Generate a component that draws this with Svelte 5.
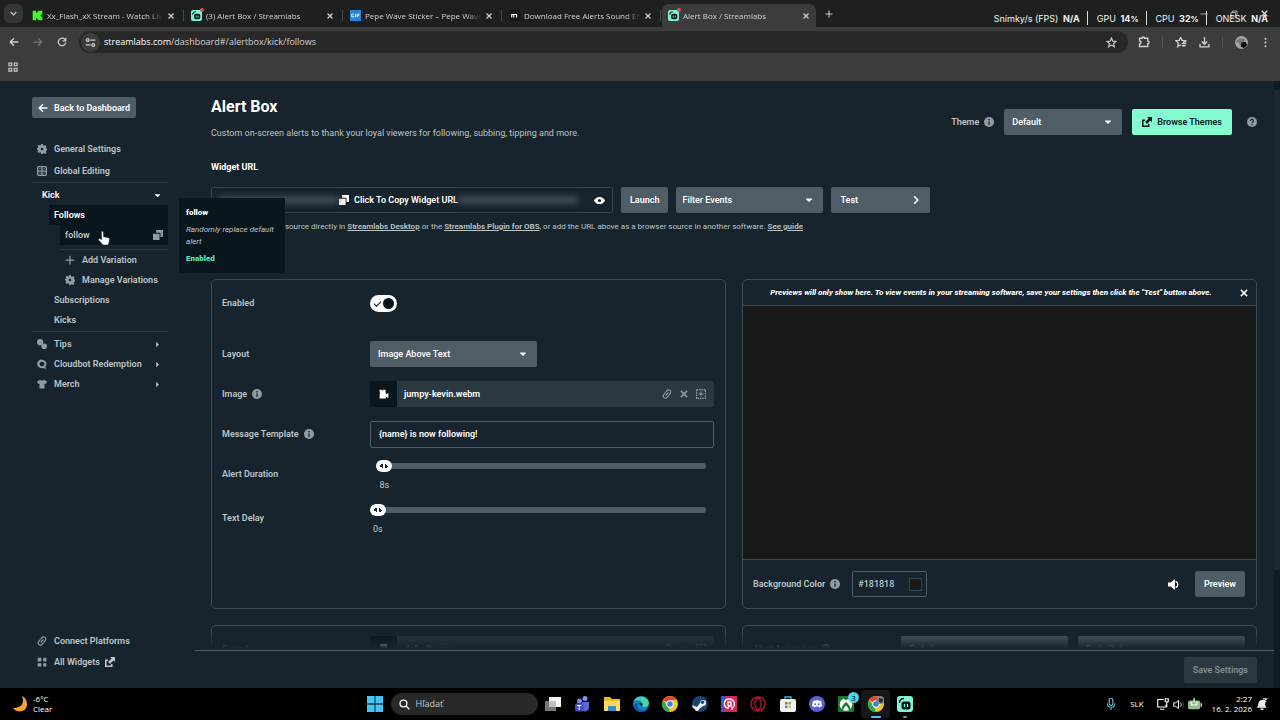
<script>
  let enabled = $state(true);
  let layout = $state('Image Above Text');
  let theme = $state('Default');
  let filter = $state('Filter Events');
  let message = $state('{name} is now following!');
  let background = $state('#181818');
  let duration = $state(8);
  let delay = $state(0);

  // Share of the track that lies left of the thumb
  let durationPos = $derived(((duration - 2) / 298) * 95);
  let delayPos = $derived((delay / 60) * 95);

  const tabs = [
    { icon: 'kick', title: 'Xx_Flash_xX Stream - Watch Liv' },
    { icon: 'streamlabs', title: '(3) Alert Box / Streamlabs' },
    { icon: 'gif', title: 'Pepe Wave Sticker – Pepe Wave' },
    { icon: 'sound', title: 'Download Free Alerts Sound Eff' },
    { icon: 'streamlabs', title: 'Alert Box / Streamlabs', active: true }
  ];

  const stats = [
    { label: 'Snímky/s (FPS)', value: 'N/A' },
    { label: 'GPU', value: '14', unit: '%' },
    { label: 'CPU', value: '32', unit: '%' },
    { label: 'ONESK', value: 'N/A' }
  ];

  const taskApps = [
    { icon: 'taskview', name: 'Task view' },
    { icon: 'teams', name: 'Teams' },
    { icon: 'folder', name: 'Explorer' },
    { icon: 'edge', name: 'Edge' },
    { icon: 'chrome', name: 'Chrome' },
    { icon: 'steam', name: 'Steam' },
    { icon: 'operagx', name: 'Game launcher' },
    { icon: 'opera', name: 'Opera GX' },
    { icon: 'store', name: 'Store' },
    { icon: 'discord', name: 'Discord' },
    { icon: 'xbox', name: 'Xbox', badge: '3' },
    { icon: 'chromeUser', name: 'Chrome', state: 'focused' },
    { icon: 'streamlabs', name: 'Streamlabs Desktop', state: 'open' }
  ];

  // All icons are drawn on a 16x16 grid
  const icons = {
    down: '<path d="M4 6l4 4 4-4" fill="none" stroke="currentColor" stroke-width="2"/>',
    caret: '<path d="M2 5h12v1.500L8 12 2 6.500z" fill="currentColor"/>',
    caretRight: '<path d="M5 3h1.500L11 8l-4.500 5H5z" fill="currentColor"/>',
    chevron: '<path d="M5 2l6 6-6 6" fill="none" stroke="currentColor" stroke-width="2.500"/>',
    close: '<path d="M3 3l10 10M13 3L3 13" fill="none" stroke="currentColor" stroke-width="2.400"/>',
    plus: '<path d="M8 1v14M1 8h14" fill="none" stroke="currentColor" stroke-width="2"/>',
    back: '<path d="M15 8H2M8 2L2 8l6 6" fill="none" stroke="currentColor" stroke-width="2.200"/>',
    forward: '<path d="M1 8h13M8 2l6 6-6 6" fill="none" stroke="currentColor" stroke-width="2"/>',
    reload: '<path d="M13 4.500A6 6 0 1 0 14 9M14 1v5H9" fill="none" stroke="currentColor" stroke-width="2"/>',
    tune: '<g fill="none" stroke="currentColor" stroke-width="1.800"><circle cx="4" cy="4.500" r="2"/><path d="M8 4.500h7M1 11.500h7"/><circle cx="12" cy="11.500" r="2"/></g>',
    apps: '<g fill="none" stroke="currentColor" stroke-width="1.800"><path d="M1.500 1.500h4.500v4.500H1.500zM10 1.500h4.500v4.500H10zM1.500 10h4.500v4.500H1.500zM10 10h4.500v4.500H10z"/></g>',
    star: '<path d="M8 1.500l1.900 4.500 4.800.4-3.700 3.100 1.200 4.800L8 11.700l-4.200 2.600L5 9.500 1.300 6.400l4.800-.4z" fill="none" stroke="currentColor" stroke-width="1.600"/>',
    starPlus: '<path d="M7.500 1.500l1.700 4.200 4.700.4-3 2.500M5.500 13l-2 1.200 1-4.700L1 6.200l4.700-.4 1.800-4.300M5.500 13l2-1.500M9 10h6M9 13h5M11 7.500h4" fill="none" stroke="currentColor" stroke-width="1.700"/>',
    puzzle: '<path d="M2 3h3.500a1.700 1.700 0 0 1 3.400 0H13v3.800a1.700 1.700 0 0 1 0 3.400V14H2v-3.500a2 2 0 0 0 0-4z" fill="none" stroke="currentColor" stroke-width="1.800"/>',
    download: '<path d="M8 0v10M4 6.500L8 10.500l4-4M1.500 10v4.500h13V10" fill="none" stroke="currentColor" stroke-width="1.900"/>',
    dots: '<g fill="currentColor"><circle cx="8" cy="2.500" r="1.500"/><circle cx="8" cy="8" r="1.500"/><circle cx="8" cy="13.500" r="1.500"/></g>',
    avatar: '<circle cx="8" cy="8" r="8" fill="#a6a6a6"/><path d="M2 5c2 0 3-3 5-2s4-1 5 1-2 3 1 4-1 5-5 4-2-4-4-4-3 1-2-3z" fill="#777"/><path d="M8 8l5-1 2 4-4 4-4-2z" fill="#111"/>',
    minimise: '<path d="M1 8h14" stroke="currentColor" stroke-width="1.500"/>',
    restore: '<path d="M2 5h9v9H2zM5 5V2h9v9h-3" fill="none" stroke="currentColor" stroke-width="1.500"/>',
    gear: '<path d="M6.600 0h2.800l.5 2.200 1.400.6 1.900-1.200 2 2-1.200 1.900.6 1.400 2.200.5v2.700l-2.200.5-.6 1.500 1.200 1.800-2 2-1.900-1.200-1.400.6L9.400 16H6.600l-.5-2.300-1.400-.6-1.900 1.200-2-2L2 10.500l-.6-1.400L0 8.600V6.400l1.700-.5L2 4.500.8 2.900l2-1.700 1.900 1.200 1.400-.4z" fill="currentColor"/><circle cx="8" cy="8" r="2" fill="#17242d"/>',
    global: '<rect x="1" y="1" width="14" height="14" rx="2" fill="none" stroke="currentColor" stroke-width="2.200"/><path d="M8 1v14M1 8h14" stroke="currentColor" stroke-width="2"/><path d="M3 4.500h4M9 4.500h4M3 11.500h4M9 11.500h4" stroke="currentColor"/>',
    copy: '<path d="M5 0h11v11h-4V4.500H5z" fill="currentColor"/><path d="M0 6h10.500v10H0z" fill="currentColor"/>',
    tips: '<circle cx="5" cy="5" r="5" fill="currentColor"/><circle cx="11.500" cy="11.500" r="4.500" fill="currentColor"/>',
    cloudbot: '<path d="M8 1a7.500 6.800 0 1 0 2 13.300L14.500 16l-1-4A7.500 6.800 0 0 0 8 1zm0 3.300a4 3.600 0 1 1 0 7.200 4 3.600 0 0 1 0-7.200z" fill="currentColor" fill-rule="evenodd"/>',
    shirt: '<path d="M5 1c1 2 5 2 6 0l5 3-2 4-2-1v8H4V7L2 8 0 4z" fill="currentColor"/>',
    link: '<g transform="rotate(-50 8 8)" fill="none" stroke="currentColor" stroke-width="1.900" stroke-linecap="round"><path d="M6.500 11.500H4a3.500 3.500 0 0 1 0-7h3.500M9.500 4.500H12a3.500 3.500 0 0 1 0 7H8.500M5.500 8h5"/></g>',
    widgets: '<path d="M1 1h6v6H1zM10 1h5v6h-5zM1 10h6v5H1zM10 10h5v5h-5z" fill="currentColor"/>',
    external: '<path d="M8 0h8v8l-2.500-2.500L8 11 5 8l5.500-5.500zM0 4h5v2.500H2.500v7h7V11H12v5H0z" fill="currentColor"/>',
    info: '<circle cx="8" cy="8" r="8" fill="currentColor"/><path d="M8 3v2.500M8 7v5.500" stroke="#17242d" stroke-width="2.200"/>',
    question: '<circle cx="8" cy="8" r="8" fill="currentColor"/><path d="M5.500 6.500C5.500 2.500 11 3.500 10.300 6.500 10 8 8 8 8 10M8 11.300v2" fill="none" stroke="#17242d" stroke-width="1.800"/>',
    eye: '<path d="M0 8c3-7 13-7 16 0-3 7-13 7-16 0z" fill="currentColor"/><circle cx="8" cy="8" r="2.300" fill="#17242d"/>',
    video: '<path d="M1 1h9.500v5H11v2.500L15 6.500v8L11 12.500V15H1V8l1-1-1-2z" fill="currentColor"/><path d="M5.700 0v3" stroke="#09161d"/>',
    library: '<path d="M1 1h14v14H1z" fill="none" stroke="currentColor" stroke-width="2" stroke-dasharray="2.500 1.300"/><path d="M8 4v8M4 8h8" stroke="currentColor" stroke-width="1.700"/>',
    audio: '<path d="M2 0h11v16H2z" fill="currentColor"/><circle cx="7.500" cy="9" r="3" fill="#17242d"/>',
    volume: '<path d="M0 5h4l6-5v16l-6-5H0z" fill="currentColor"/><path d="M11 3.500c4.500 2 4.500 7 0 9" fill="none" stroke="currentColor" stroke-width="2"/>',
    hand: '<path d="M5 1.500C5 0 7.200 0 7.300 1.500l.3 5 5.400 1.200c1 .3 1.300 1 1.200 2L13.500 14l-1 2H7L2 10.500c-1-1.500.5-2.500 2-1.500l1.300 1z" fill="#fff" stroke="#17242d" stroke-width=".6"/>',
    kick: '<path d="M1 1h5v3h1.500V2.500H9V1h6v5h-1.500v1.500H12v1h1.500V10H15v5H9v-1.500H7.500V12H6v3H1z" fill="#3bfb2a"/>',
    streamlabs: '<rect width="16" height="16" rx="3" fill="#80f5d2"/><path d="M2.500 7C2.500 4 4 2.500 7 2.500" fill="none" stroke="#09161d" stroke-width="1.500"/><rect x="4.500" y="5.500" width="9" height="8" rx="2.500" fill="#09161d"/><path d="M7.500 8v3M10.500 8v3" stroke="#80f5d2" stroke-width="1.300"/>',
    gif: '<rect width="16" height="16" fill="#2d83d3"/><path d="M5.500 6H2.500v4h3V8.300M8 5.500v5M10.500 10.500V6h3.500M10.500 8.300h3" fill="none" stroke="#dceeff" stroke-width="1.400"/>',
    sound: '<rect width="16" height="16" rx="2" fill="#161616"/><path d="M4 11V6.500h3V11M7 6.500h4V11" fill="none" stroke="#fff" stroke-width="1.600"/>',
    moon: '<path d="M10 0c3 7-1 12-9 12 3 5 13 5 14-3 .4-4-2-8-5-9z" fill="#f6a431"/>',
    windows: '<path d="M0 0h7.600v7.600H0zM8.400 0H16v7.600H8.400zM0 8.400h7.600V16H0zM8.400 8.400H16V16H8.400z" fill="#45c5f5"/>',
    search: '<circle cx="6.500" cy="6.500" r="5" fill="none" stroke="currentColor" stroke-width="1.900"/><path d="M10 10l5 5" stroke="currentColor" stroke-width="2"/>',
    taskview: '<path d="M4 1h12v10H4z" fill="#f4f4f4"/><path d="M0 5h11v10H0z" fill="#777"/><path d="M4 5h7v6H4z" fill="#bdbdbd"/>',
    teams: '<circle cx="5.500" cy="5" r="2.500" fill="#7b83eb"/><circle cx="11" cy="2.500" r="2.500" fill="#868df4"/><path d="M8 6h7v6a4 4 0 0 1-7 2z" fill="#6069d6"/><rect x="1" y="7.500" width="8.500" height="8" rx="2" fill="#474fbd"/><path d="M3 9.500h4.500M5.200 9.500v4.500" stroke="#fff"/>',
    folder: '<path d="M0 1h6l2 2h8v12H0z" fill="#f2b723"/><path d="M0 5h16v10H0z" fill="#ffdc60"/><path d="M4 10h8v5H4z" fill="#3e89c9"/>',
    edge: '<circle cx="8" cy="8" r="8" fill="#1681ca"/><path d="M1 5C4-1 15-1 16 7c0 4-5 5-7 3 2-4-3-7-8-5z" fill="#48d6a3"/><path d="M5 8c-2 4 2 8 8 6-4 4-12 1-12-4 0-2 2-3 4-2z" fill="#0b56a8"/><path d="M9 10c-2-1-2-3-4-2 1-2 6-1 4 2z" fill="#07111c"/>',
    chrome: '<circle cx="8" cy="8" r="8" fill="#f2c62e"/><path d="M8 8L1 4C4-1 12-1 15 4H8z" fill="#e44435"/><path d="M1 4l5 7 2 5C1 16-2 9 1 4z" fill="#30a851"/><circle cx="8" cy="8" r="3.700" fill="#fff"/><circle cx="8" cy="8" r="2.800" fill="#3d7de9"/>',
    steam: '<circle cx="8" cy="8" r="8" fill="#164574"/><path d="M0 9l5 2 3-4a3 3 0 1 1 3 3l-4 3a2 2 0 0 1-4 0l-2-1z" fill="#f3f5f7"/><circle cx="10.500" cy="6.300" r="1.700" fill="#164574"/>',
    operagx: '<path d="M0 0h16v16H0z" fill="#d92557"/><path d="M0 0h5l-2 16H0z" fill="#4152cc"/><path d="M11 14v-2c4-2 3-9-3-9s-6 9-1 9l1-2h2V6H7v4" fill="none" stroke="#fff" stroke-width="1.400"/>',
    opera: '<circle cx="8" cy="8" r="7" fill="none" stroke="#bd1739" stroke-width="1.400"/><ellipse cx="8" cy="8" rx="3.200" ry="5.500" fill="none" stroke="#bd1739" stroke-width="1.300"/>',
    store: '<path d="M5 4V1h6v3" fill="none" stroke="#3cb4eb" stroke-width="1.300"/><rect x="0" y="3" width="16" height="13" rx="2" fill="#edf1f4"/><path d="M5 6h2.500v2.500H5z" fill="#e95131"/><path d="M8.500 6H11v2.500H8.500z" fill="#75b840"/><path d="M5 9.500h2.500V12H5z" fill="#259edc"/><path d="M8.500 9.500H11V12H8.500z" fill="#f5b522"/>',
    discord: '<circle cx="8" cy="8" r="8" fill="#5564d9"/><path d="M4 5c3-1 5-1 8 0l1 5-3 1.500-.6-1H6.600l-.6 1L3 10z" fill="#fff"/><circle cx="6.300" cy="8.300" r="1" fill="#5564d9"/><circle cx="9.700" cy="8.300" r="1" fill="#5564d9"/>',
    xbox: '<rect width="16" height="16" rx="1" fill="#187a2a"/><circle cx="8" cy="8.500" r="6.300" fill="#fff"/><path d="M8 4.500C6.500 3 5 2.300 4 3c2-1.500 6-1.500 8 0-1-.7-2.500 0-4 1.500zM3.500 13c.5-3 2.500-5.500 4.500-7 2 1.500 4 4 4.500 7l-1.500 1.200C10.300 12 9 10.300 8 9.500c-1 .8-2.300 2.500-3 4.700z" fill="#187a2a"/>',
    chromeUser: '<circle cx="8" cy="8" r="8" fill="#f2c62e"/><path d="M8 8L1 4C4-1 12-1 15 4H8z" fill="#e44435"/><path d="M1 4l5 7 2 5C1 16-2 9 1 4z" fill="#30a851"/><circle cx="8" cy="8" r="3.700" fill="#fff"/><circle cx="8" cy="8" r="2.800" fill="#3d7de9"/><circle cx="12" cy="4" r="4" fill="#858585"/><path d="M11 2l4 1-1 4-3-1z" fill="#282828"/>',
    mic: '<rect x="5.500" y="0" width="5" height="10" rx="2.500" fill="none" stroke="#a9dff2" stroke-width="1.300"/><path d="M3 7c0 7 10 7 10 0M8 12v4" fill="none" stroke="#45b9d8" stroke-width="1.500"/>',
    network: '<path d="M9 2H1v10h11V9M4 15h6M11 1h4v4h-4zM13 5v7" fill="none" stroke="currentColor" stroke-width="1.500"/>',
    speaker: '<path d="M1 5.500h3L8 2v12l-4-3.500H1zM10.500 5c2 2 2 4 0 6" fill="none" stroke="currentColor" stroke-width="1.400"/><path d="M13 3c3 3 3 7 0 10" fill="none" stroke="#555" stroke-width="1.400"/>',
    battery: '<rect x="0" y="4" width="14" height="10" rx="2" fill="#94bf8d"/><path d="M14.500 7h1.500v4h-1.500z" fill="#ddd"/><path d="M7 1v5M4 5v4h6V5" fill="none" stroke="#e9f5e7" stroke-width="1.500"/>',
    bell: '<path d="M1 13c3-3 1-8 5-10s8 0 6 6l2 4z" fill="#eee"/><path d="M6 14h4v2H6z" fill="#eee"/><path d="M9 1h5l-4 4h4" fill="none" stroke="#eee" stroke-width="1.500"/>'
  };
</script>

{#snippet icon(name, size = 10)}
  <svg class="icon" width={size} height={size} viewBox="0 0 16 16" aria-hidden="true">{@html icons[name]}</svg>
{/snippet}

<div class="screen">
  <div class="stats">
    {#each stats as stat}
      <span>{stat.label} <b>{stat.value}<small>{stat.unit}</small></b></span>
    {/each}
  </div>

  <!-- Browser -->
  <header class="browser">
    <div class="tab-strip">
      <button class="tab-search" aria-label="Search tabs">{@render icon('down', 11)}</button>
      {#each tabs as tab}
        <div class="tab" class:active={tab.active}>
          {@render icon(tab.icon, 11)}
          <span class="tab-title">{tab.title}</span>
          {#if tab.icon === 'streamlabs'}<i class="recording"></i>{/if}
          <button aria-label="Close tab">{@render icon('close', 8)}</button>
        </div>
      {/each}
      <button class="new-tab" aria-label="New tab">{@render icon('plus', 8)}</button>
      <div class="window-controls">
        <button aria-label="Minimise">{@render icon('minimise', 8)}</button>
        <button aria-label="Restore">{@render icon('restore', 8)}</button>
        <button aria-label="Close">{@render icon('close', 9)}</button>
      </div>
    </div>
    <div class="toolbar">
      <button aria-label="Back">{@render icon('back')}</button>
      <button class="dim" aria-label="Forward">{@render icon('forward')}</button>
      <button aria-label="Reload">{@render icon('reload')}</button>
      <div class="omnibox">
        <span class="site">{@render icon('tune', 11)}</span>
        <span class="address"><b>streamlabs.com</b>/dashboard#/alertbox/kick/follows</span>
        {@render icon('star', 11)}
      </div>
      <div class="extensions">
        <button aria-label="Extensions">{@render icon('puzzle', 12)}</button>
        <i></i>
        <button aria-label="Favourites">{@render icon('starPlus', 12)}</button>
        <button aria-label="Downloads">{@render icon('download', 11)}</button>
        <i></i>
        <button aria-label="Profile">{@render icon('avatar', 13)}</button>
        <button aria-label="Menu">{@render icon('dots', 11)}</button>
      </div>
    </div>
    <div class="bookmarks"><button aria-label="Apps">{@render icon('apps', 10)}</button></div>
  </header>

  <!-- Streamlabs dashboard -->
  <div class="dashboard">
    <aside>
      <button class="btn back">{@render icon('back', 10)} Back to Dashboard</button>
      <nav>
        <div class="group top">
          <a href="#general">{@render icon('gear')} General Settings</a>
          <a href="#global">{@render icon('global')} Global Editing</a>
        </div>
        <div class="group">
          <a class="kick" href="#kick">Kick <span class="end">{@render icon('caret', 7)}</span></a>
          <a class="sub selected" href="#follows">Follows</a>
          <div class="variations">
            <div class="current">
              <a class="variation" href="#follow">follow <span class="end">{@render icon('copy')}</span></a>
              <span class="pointer">{@render icon('hand', 14)}</span>
              <div class="tooltip" role="tooltip">
                <strong>follow</strong>
                <em>Randomly replace default alert</em>
                <b>Enabled</b>
              </div>
            </div>
            <a class="action" href="#add">{@render icon('plus')} Add Variation</a>
            <a class="action" href="#manage">{@render icon('gear')} Manage Variations</a>
          </div>
          <a class="sub" href="#subscriptions">Subscriptions</a>
          <a class="sub" href="#kicks">Kicks</a>
        </div>
        <div class="group">
          <a href="#tips">{@render icon('tips')} Tips <span class="end">{@render icon('caretRight', 7)}</span></a>
          <a href="#cloudbot">{@render icon('cloudbot')} Cloudbot Redemption <span class="end">{@render icon('caretRight', 7)}</span></a>
          <a href="#merch">{@render icon('shirt')} Merch <span class="end">{@render icon('caretRight', 7)}</span></a>
        </div>
      </nav>
      <nav class="bottom">
        <a href="#platforms">{@render icon('link')} Connect Platforms</a>
        <a href="#widgets">{@render icon('widgets')} <span>All Widgets</span> <span class="out">{@render icon('external')}</span></a>
      </nav>
    </aside>

    <main>
      <div class="scroll">
        <div class="page-head">
          <div>
            <h1>Alert Box</h1>
            <p>Custom on-screen alerts to thank your loyal viewers for following, subbing, tipping and more.</p>
          </div>
          <div class="theme">
            <label for="theme">Theme</label>
            <span class="muted">{@render icon('info')}</span>
            <div class="select">
              <select id="theme" bind:value={theme}><option>Default</option></select>
              {@render icon('caret', 8)}
            </div>
            <button class="btn primary">{@render icon('external')} Browse Themes</button>
            <span class="muted">{@render icon('question')}</span>
          </div>
        </div>

        <h2>Widget URL</h2>
        <div class="url-row">
          <div class="url-box">
            <i class="secret"></i>
            <button class="copy">{@render icon('copy')} Click To Copy Widget URL</button>
            <i class="secret"></i>
            <button class="reveal" aria-label="Show URL">{@render icon('eye', 11)}</button>
          </div>
          <button class="btn">Launch</button>
          <div class="select filter">
            <select aria-label="Filter Events" bind:value={filter}><option>Filter Events</option></select>
            {@render icon('caret', 8)}
          </div>
          <button class="btn test">Test {@render icon('chevron')}</button>
        </div>
        <p class="help">
          Add this widget as a source directly in <a href="#desktop">Streamlabs Desktop</a> or the <a href="#plugin">Streamlabs Plugin for OBS</a>, or add the URL above as a browser source in another software. <a href="#guide">See guide</a>
        </p>

        <div class="cards">
          <section class="card">
            <div class="row first">
              <label for="enabled">Enabled</label>
              <input id="enabled" class="toggle" type="checkbox" bind:checked={enabled} />
            </div>
            <div class="row">
              <label for="layout">Layout</label>
              <div class="select short">
                <select id="layout" bind:value={layout}><option>Image Above Text</option></select>
                {@render icon('caret', 8)}
              </div>
            </div>
            <div class="row">
              <span class="name">Image <span class="muted">{@render icon('info')}</span></span>
              <div class="media">
                <span class="thumb">{@render icon('video')}</span>
                <span class="file">jumpy-kevin.webm</span>
                <button aria-label="Link">{@render icon('link')}</button>
                <button aria-label="Remove">{@render icon('close')}</button>
                <button aria-label="Library">{@render icon('library')}</button>
              </div>
            </div>
            <div class="row">
              <label for="message">Message Template <span class="muted">{@render icon('info')}</span></label>
              <input id="message" class="text" type="text" bind:value={message} />
            </div>
            <div class="row range">
              <label for="duration">Alert Duration</label>
              <div class="slider" style="--pos: {durationPos}%">
                <input id="duration" type="range" min="2" max="300" bind:value={duration} />
                <output for="duration">{duration}s</output>
              </div>
            </div>
            <div class="row range">
              <label for="delay">Text Delay</label>
              <div class="slider" style="--pos: {delayPos}%">
                <input id="delay" type="range" min="0" max="60" bind:value={delay} />
                <output for="delay">{delay}s</output>
              </div>
            </div>
          </section>

          <section class="card preview">
            <div class="notice">
              <em>Previews will only show here. To view events in your streaming software, save your settings then click the "Test" button above.</em>
              <button aria-label="Dismiss">{@render icon('close')}</button>
            </div>
            <div class="canvas"></div>
            <div class="preview-foot">
              <label for="background">Background Color <span class="muted">{@render icon('info')}</span></label>
              <div class="color">
                <input id="background" type="text" bind:value={background} />
                <i></i>
              </div>
              <button class="mute" aria-label="Volume">{@render icon('volume', 11)}</button>
              <button class="btn">Preview</button>
            </div>
          </section>

          <section class="card">
            <div class="row">
              <span class="name">Sound</span>
              <div class="media">
                <span class="thumb">{@render icon('audio', 10)}</span>
                <span class="file">default.ogg</span>
                <button aria-label="Link">{@render icon('link')}</button>
                <button aria-label="Remove">{@render icon('close')}</button>
                <button aria-label="Library">{@render icon('library')}</button>
              </div>
            </div>
          </section>

          <section class="card">
            <div class="row">
              <label for="fade-in">Alert Animation <span class="muted">{@render icon('info')}</span></label>
              <div class="pair">
                <div class="select"><select id="fade-in"><option>Fade In</option></select>{@render icon('caret', 8)}</div>
                <div class="select"><select aria-label="Animation out"><option>Fade Out</option></select>{@render icon('caret', 8)}</div>
              </div>
            </div>
          </section>
        </div>
      </div>
      <footer><button class="btn save" disabled>Save Settings</button></footer>
    </main>
    <div class="scrollbar"><i></i></div>
  </div>

  <!-- Windows taskbar -->
  <div class="taskbar">
    <div class="weather">{@render icon('moon', 16)}<span>-6°C<br />Clear</span></div>
    <div class="apps">
      <button class="start" aria-label="Start">{@render icon('windows', 16)}</button>
      <label class="search">{@render icon('search', 11)}<input type="text" placeholder="Hľadať" aria-label="Hľadať" /></label>
      <div class="pinned">
        {#each taskApps as app}
          <button class={app.state} aria-label={app.name}>
            {@render icon(app.icon, 16)}
            {#if app.badge}<span class="badge">{app.badge}</span>{/if}
          </button>
        {/each}
      </div>
    </div>
    <div class="tray">
      {@render icon('mic', 12)}
      <span class="lang">SLK</span>
      <span class="system">{@render icon('network', 12)}{@render icon('speaker', 11)}{@render icon('battery', 14)}</span>
      <span class="clock">2:27<br />16. 2. 2026</span>
      {@render icon('bell', 12)}
    </div>
  </div>
</div>

<style>
  :global(body) {
    margin: 0;
    background: #000;
  }

  .screen {
    display: flex;
    flex-direction: column;
    height: 100vh;
    position: relative;
    overflow: hidden;
    font: 9px/16px Roboto, sans-serif;
    color: #bdc4c7;
  }

  .screen * {
    box-sizing: border-box;
  }

  .icon {
    display: block;
    flex: none;
  }

  button, input, select {
    font: inherit;
    color: inherit;
    border: 0;
    background: none;
    padding: 0;
    margin: 0;
    outline: 0;
  }

  button {
    display: flex;
    align-items: center;
    justify-content: center;
  }

  a {
    color: inherit;
    text-decoration: none;
  }

  .stats {
    position: absolute;
    z-index: 3;
    top: 11px;
    right: 5px;
    display: flex;
    font: 9px/16px Inter, sans-serif;
    color: #f2f2f2;
  }

  .stats span {
    padding: 0 7px 0 9px;
    border-right: 1px solid #ddd;
    white-space: nowrap;
    height: 14px;
  }

  .stats b {
    margin-left: 2px;
  }

  .stats span:last-child {
    border: 0;
  }

  .stats small {
    font-size: 8px;
  }

  /* Browser chrome */
  .browser {
    flex: none;
    background: #3c3c3c;
    color: #d0d0d0;
    font-family: "Open Sans", sans-serif;
  }

  .tab-strip {
    display: flex;
    align-items: center;
    height: 27px;
    padding-left: 4px;
    background: #1e201f;
  }

  .tab-search {
    width: 19px;
    height: 19px;
    margin-right: 3px;
    border-radius: 6px;
    background: #363636;
  }

  .tab {
    position: relative;
    display: flex;
    align-items: center;
    flex: 0 1 159px;
    min-width: 0;
    height: 23px;
    gap: 4px;
    padding: 0 10px 0 6px;
    align-self: flex-end;
    font-size: 8px;
  }

  .tab:not(.active)::after {
    content: "";
    position: absolute;
    right: 1px;
    height: 11px;
    border-right: 1px solid #494949;
  }

  .tab.active {
    background: #3c3c3c;
    border-radius: 7px 7px 0 0;
    flex-basis: 154px;
    margin-right: 5px;
    padding-right: 6px;
  }

  .tab-title {
    flex: 1;
    overflow: hidden;
    white-space: nowrap;
    mask-image: linear-gradient(to right, #000 88%, transparent);
  }

  .recording {
    position: absolute;
    left: 15px;
    top: 4px;
    width: 4px;
    height: 4px;
    border-radius: 50%;
    background: #e0485a;
  }

  .new-tab {
    width: 16px;
  }

  .window-controls {
    display: flex;
    gap: 22px;
    margin-left: auto;
    padding-right: 11px;
  }

  .toolbar {
    display: flex;
    align-items: center;
    height: 30px;
    padding: 0 9px;
    gap: 14px;
  }

  .dim {
    color: #777;
  }

  .omnibox {
    display: flex;
    align-items: center;
    flex: 1;
    height: 22px;
    padding: 0 11px 0 2px;
    margin-left: -2px;
    border-radius: 11px;
    background: #282828;
  }

  .site {
    display: grid;
    place-items: center;
    width: 19px;
    height: 19px;
    border-radius: 50%;
    background: #3c3c3c;
  }

  .address {
    flex: 1;
    padding-left: 4px;
  }

  .address b {
    font-weight: 400;
    color: #fff;
  }

  .extensions {
    display: flex;
    align-items: center;
    gap: 12px;
    margin-left: -4px;
  }

  .extensions i {
    height: 11px;
    border-left: 1px solid #555;
  }

  .bookmarks {
    height: 24px;
    padding: 5px 8px;
  }

  /* Dashboard */
  .dashboard {
    display: flex;
    flex: 1;
    min-height: 0;
    background: #17242d;
  }

  aside {
    display: flex;
    flex-direction: column;
    width: 195px;
    flex: none;
    padding: 16px 27px 16px 32px;
    font-weight: 600;
  }

  .btn {
    height: 26px;
    padding: 0 9px;
    gap: 5px;
    border-radius: 2px;
    background: #4f5e66;
    color: #fff;
    font-weight: 600;
    white-space: nowrap;
  }

  .back {
    align-self: flex-start;
    height: 21px;
    padding: 0 6px;
    gap: 6px;
    margin-bottom: 20px;
  }

  aside a {
    display: flex;
    align-items: center;
    height: 20px;
    padding-left: 5px;
    gap: 7px;
    white-space: nowrap;
  }

  aside a > .icon {
    color: #919ba1;
  }

  .group {
    padding: 2px 0 1px;
    border-top: 1px solid #2b3840;
  }

  .group.top {
    padding: 0;
    border: 0;
  }

  .top a {
    height: 22px;
  }

  .bottom a {
    height: 21px;
  }

  .end {
    display: block;
    margin-left: auto;
    padding-right: 7px;
  }

  .kick {
    padding-left: 10px;
    color: #fff;
  }

  aside .sub {
    margin-left: 17px;
  }

  .selected {
    background: #09161d;
    color: #fff;
  }

  .variations {
    margin-left: 28px;
  }

  .current {
    position: relative;
    padding-bottom: 4px;
    border-bottom: 1px solid #2b3840;
  }

  .variation {
    background: #09161d;
  }

  .variation .end {
    padding-right: 5px;
    color: #919ba1;
  }

  .pointer {
    position: absolute;
    left: 37px;
    top: 6px;
  }

  .tooltip {
    position: absolute;
    z-index: 2;
    left: 119px;
    top: -27px;
    width: 106px;
    padding: 9px 7px 8px;
    background: #09161d;
    font-size: 8px;
    line-height: 12px;
  }

  .tooltip > * {
    display: block;
    margin-bottom: 5px;
  }

  .tooltip strong {
    color: #fff;
  }

  .tooltip em {
    font-weight: 400;
  }

  .tooltip b {
    color: #5fe0b0;
    margin: 0;
  }

  .bottom {
    margin-top: auto;
  }

  .out {
    margin-left: -2px;
  }

  main {
    display: flex;
    flex-direction: column;
    flex: 1;
    min-width: 0;
  }

  .scroll {
    position: relative;
    flex: 1;
    min-height: 0;
    overflow: hidden;
    padding: 16px 17px 0 16px;
  }

  .scroll::after {
    content: "";
    position: absolute;
    left: 0;
    right: 0;
    bottom: 0;
    height: 18px;
    background: linear-gradient(to bottom, transparent, #17242d 90%);
    pointer-events: none;
  }

  .page-head {
    display: flex;
    justify-content: space-between;
  }

  h1 {
    margin: 0 0 8px;
    font-size: 16px;
    line-height: 20px;
    font-weight: 700;
    color: #fff;
  }

  h2 {
    margin: 18px 0 12px;
    font-size: 9px;
    line-height: 16px;
    font-weight: 700;
    color: #fff;
  }

  p {
    margin: 0;
  }

  .theme {
    display: flex;
    align-items: center;
    gap: 10px;
    padding-top: 6px;
    font-weight: 500;
  }

  .theme label {
    margin-right: -5px;
  }

  .theme .select {
    width: 118px;
  }

  .theme > .muted:last-child {
    margin-left: 5px;
  }

  .muted {
    color: #919ba1;
  }

  .btn.primary {
    padding: 0 10px;
    background: #83fdd0;
    color: #09161d;
  }

  .select {
    position: relative;
    display: flex;
    align-items: center;
    height: 26px;
    border-radius: 2px;
    background: #4f5e66;
    color: #fff;
  }

  .select select {
    width: 100%;
    height: 26px;
    padding: 0 8px;
    appearance: none;
    font-weight: 500;
  }

  .select .icon {
    position: absolute;
    right: 10px;
    pointer-events: none;
  }

  .url-row {
    display: flex;
    gap: 8px;
  }

  .url-box {
    display: flex;
    align-items: center;
    flex: 0 1 402px;
    min-width: 0;
    height: 26px;
    padding: 0 7px;
    border: 1px solid #36444c;
    border-radius: 2px;
  }

  .secret {
    flex: 1;
    height: 6px;
    background: #4a575f;
    filter: blur(3px);
  }

  .copy {
    gap: 5px;
    color: #fff;
    font-weight: 600;
  }

  .reveal {
    margin-left: 16px;
    color: #fff;
  }

  .filter {
    width: 147px;
  }

  .filter select {
    padding-left: 6px;
  }

  .test {
    width: 99px;
    justify-content: space-between;
  }

  .help {
    margin: 6px 0 44px;
    font-size: 8px;
    white-space: nowrap;
  }

  .help a {
    font-weight: 600;
    text-decoration: underline;
  }

  .cards {
    display: grid;
    grid-template-columns: 1fr 1fr;
    gap: 16px;
  }

  .card {
    min-width: 0;
    padding: 3px 11px 3px 10px;
    border: 1px solid #3c4a52;
    border-radius: 5px;
  }

  .row {
    display: grid;
    grid-template-columns: 148px 1fr;
    align-items: center;
    height: 40px;
  }

  .row.first {
    margin-bottom: 11px;
  }

  label, .name {
    display: flex;
    align-items: center;
    gap: 5px;
    font-weight: 600;
    white-space: nowrap;
  }

  .toggle {
    position: relative;
    width: 27px;
    height: 17px;
    border-radius: 9px;
    appearance: none;
    background: #4f5e66;
  }

  .toggle:checked {
    background: #fff;
  }

  .toggle::before {
    content: "";
    position: absolute;
    top: 3px;
    left: 3px;
    width: 11px;
    height: 11px;
    border-radius: 50%;
    background: #09161d;
  }

  .toggle:checked::before {
    left: 13px;
  }

  .toggle:checked::after {
    content: "";
    position: absolute;
    left: 4px;
    top: 6px;
    width: 6px;
    height: 3px;
    border: solid #09161d;
    border-width: 0 0 1px 1px;
    transform: rotate(-45deg);
  }

  .short {
    width: 167px;
  }

  .media {
    display: flex;
    align-items: center;
    height: 26px;
    gap: 7px;
    padding-right: 8px;
    border-radius: 2px;
    overflow: hidden;
    background: #2b383f;
    color: #919ba1;
  }

  .thumb {
    display: grid;
    place-items: center;
    width: 27px;
    height: 26px;
    background: #09161d;
    color: #fff;
  }

  .file {
    flex: 1;
    color: #fff;
    font-weight: 600;
  }

  .text {
    width: 100%;
    height: 27px;
    padding: 0 8px;
    border: 1px solid #4f5e66;
    border-radius: 2px;
    color: #fff;
    font-weight: 600;
  }

  .row.range {
    align-items: start;
    height: 44px;
    padding-top: 5px;
  }

  .range label {
    line-height: 30px;
  }

  .slider {
    padding-right: 8px;
  }

  .slider input {
    display: block;
    width: 100%;
    height: 14px;
    appearance: none;
  }

  .slider input::-webkit-slider-runnable-track {
    height: 6px;
    border-radius: 3px;
    background: linear-gradient(to right, transparent calc(var(--pos) + 4px), #4f5e66 0);
  }

  .slider input::-webkit-slider-thumb {
    appearance: none;
    width: 16px;
    height: 12px;
    margin-top: -3px;
    border-radius: 6px;
    background:
      conic-gradient(from 45deg at 0 50%, #17242d 90deg, transparent 0) 4px 4px / 3px 4px no-repeat,
      conic-gradient(from 225deg at 100% 50%, #17242d 90deg, transparent 0) 9px 4px / 3px 4px no-repeat,
      #fff;
  }

  .slider output {
    display: block;
    margin-left: var(--pos);
    padding: 4px 0 0 3px;
  }

  .preview {
    display: flex;
    flex-direction: column;
    padding: 0;
  }

  .notice {
    display: flex;
    align-items: center;
    height: 26px;
    padding-right: 7px;
    border-bottom: 1px solid #3c4a52;
    color: #fff;
    font-size: 8px;
    font-weight: 800;
  }

  .notice em {
    flex: 1;
    text-align: center;
    white-space: nowrap;
  }

  .canvas {
    min-height: 253px;
    flex: 1;
    background: #181818;
  }

  .preview-foot {
    display: flex;
    align-items: center;
    height: 49px;
    padding: 0 11px 0 10px;
    border-top: 1px solid #3c4a52;
  }

  .color {
    display: flex;
    align-items: center;
    height: 26px;
    width: 75px;
    margin-left: 12px;
    padding: 0 4px 0 5px;
    border: 1px solid #4f5e66;
    border-radius: 2px;
  }

  .color input {
    flex: 1;
    min-width: 0;
    font-weight: 500;
  }

  .color i {
    width: 13px;
    height: 13px;
    border: 1px solid #36444c;
    background: #181818;
  }

  .mute {
    margin: 0 16px 0 auto;
    color: #fff;
  }

  .pair {
    display: grid;
    grid-template-columns: 1fr 1fr;
    gap: 10px;
  }

  footer {
    display: flex;
    justify-content: flex-end;
    align-items: center;
    flex: none;
    height: 38px;
    padding-right: 17px;
    border-top: 1px solid #4f5e66;
  }

  .save {
    background: #2b383f;
    color: #868f94;
  }

  .scrollbar {
    width: 6px;
    background: #101c24;
  }

  .scrollbar i {
    display: block;
    height: 480px;
    margin-top: 9px;
    background: #1b2931;
  }

  /* Taskbar */
  .taskbar {
    display: grid;
    grid-template-columns: 1fr auto 1fr;
    align-items: center;
    flex: none;
    height: 32px;
    background: #000;
    color: #fff;
    font: 8px/10px "Open Sans", sans-serif;
  }

  .weather, .tray, .apps {
    display: flex;
    align-items: center;
  }

  .apps {
    padding-left: 6px;
  }

  .weather {
    gap: 5px;
    padding-left: 12px;
  }

  .start {
    width: 16px;
    margin-right: 8px;
  }

  .search {
    width: 147px;
    height: 22px;
    gap: 6px;
    padding-left: 8px;
    border-radius: 11px;
    background: #292929;
    font: 9px/16px "Open Sans", sans-serif;
  }

  .search input {
    width: 100%;
  }

  .search input::placeholder {
    color: #ccc;
  }

  .pinned {
    display: flex;
    width: 381px;
    margin-left: 1px;
  }

  .pinned button {
    position: relative;
    flex: 1;
    height: 28px;
    border-radius: 3px;
  }

  .badge {
    position: absolute;
    top: 2px;
    right: 2px;
    width: 11px;
    height: 11px;
    border-radius: 50%;
    background: #4cd5e8;
    color: #000;
    font-size: 8px;
    line-height: 11px;
  }

  .focused {
    background: #171717;
  }

  .focused::after, .open::after {
    content: "";
    position: absolute;
    bottom: 0;
    width: 10px;
    height: 2px;
    border-radius: 1px;
    background: #4cc2ff;
  }

  .open::after {
    width: 4px;
    background: #888;
  }

  .tray {
    justify-content: flex-end;
    padding-right: 12px;
  }

  .lang {
    margin: 0 13px;
  }

  .system {
    display: flex;
    align-items: center;
    gap: 4px;
  }

  .clock {
    margin: 0 4px 0 10px;
    text-align: right;
  }
</style>
